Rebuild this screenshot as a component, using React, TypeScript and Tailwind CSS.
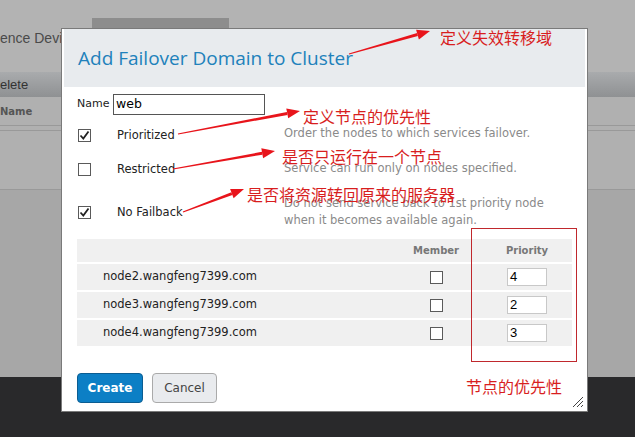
import React from "react";

const sans = "font-['DejaVu_Sans',sans-serif]";
const cjk = "font-['Noto_Sans_CJK_SC',sans-serif]";

function Arrow({ x1, y1, x2, y2 }: { x1: number; y1: number; x2: number; y2: number }) {
  const dx = x2 - x1;
  const dy = y2 - y1;
  const len = Math.hypot(dx, dy);
  const ux = dx / len;
  const uy = dy / len;
  const nx = -uy;
  const ny = ux;
  const bx = x2 - ux * 13;
  const by = y2 - uy * 13;
  const p = (x: number, y: number) => `${x.toFixed(1)},${y.toFixed(1)}`;
  const shaft = [
    p(x1 + nx * 0.5, y1 + ny * 0.5),
    p(bx + nx * 1.5, by + ny * 1.5),
    p(bx - nx * 1.5, by - ny * 1.5),
    p(x1 - nx * 0.5, y1 - ny * 0.5),
  ].join(" ");
  const head = [p(x2, y2), p(bx + nx * 5, by + ny * 5), p(bx - nx * 5, by - ny * 5)].join(" ");
  return (
    <g fill="#e8141b">
      <polygon points={shaft} />
      <polygon points={head} />
    </g>
  );
}

function Box({ checked }: { checked?: boolean }) {
  return (
    <span className="flex h-[13px] w-[13px] items-center justify-center border border-[#5a5a5a] bg-white">
      {checked && (
        <svg width="11" height="11" viewBox="0 0 11 11">
          <path d="M1.5 5.5 L4.3 8.5 L9.5 1.5" fill="none" stroke="#222" strokeWidth="1.8" />
        </svg>
      )}
    </span>
  );
}

const nodes = [
  { name: "node2.wangfeng7399.com", priority: "4" },
  { name: "node3.wangfeng7399.com", priority: "2" },
  { name: "node4.wangfeng7399.com", priority: "3" },
];

export default function App() {
  return (
    <div className={`relative h-[437px] w-[635px] overflow-hidden ${sans}`}>
      {/* page behind the dialog */}
      <div className="flex h-full flex-col">
        <div className="h-[72px] bg-[#b3b3b3]">
          <div className="ml-[92px] mt-[18px] h-[10px] w-[137px] bg-[#8d8d8d]" />
          <p className="mt-[2px] whitespace-nowrap font-['Liberation_Sans',sans-serif] text-[14px] leading-[16px] text-[#4a4a4a]">
            ence Devices
          </p>
        </div>
        <div className="flex h-[25px] items-center bg-gradient-to-b from-[#a9abad] to-[#8f9193] font-['Liberation_Sans',sans-serif] text-[13px] text-[#333]">
          elete
        </div>
        <div className="flex h-[29px] items-center border-b border-[#999] bg-[#b0b0b0] text-[10px] font-bold text-[#555]">
          Name
        </div>
        <div className="h-[5px] border-b border-[#999] bg-[#b0b0b0]" />
        <div className="h-[59px] border-b border-[#999] bg-[#b0b0b0]" />
        <div className="h-[187px] bg-[#a7a7a7]" />
        <div className="flex-1 bg-[#29292b]" />
      </div>

      {/* dialog */}
      <div className="absolute left-[61px] top-[28px] flex h-[384px] w-[527px] flex-col border border-[#7a7a7a] bg-white px-[2px]">
        <div className="flex h-[58px] items-center bg-[#e8ebee] pl-[14px]">
          <h2 className="font-['Open_Sans',sans-serif] text-[19px] text-[#2181bb]">Add Failover Domain to Cluster</h2>
        </div>
        <div className="flex flex-col pl-[13px] text-[11.5px] text-[#222]">
          <div className="mt-[7px] flex h-[21px] items-center">
            <span className="w-[36px] text-[11px]">Name</span>
            <span className="flex h-[21px] w-[152px] items-center border border-[#555] pl-[2px] text-[12.5px] text-black">web</span>
          </div>

          <div className="mt-[9px] flex h-[22px] items-center">
            <span className="w-[40px] pl-[1px]"><Box checked /></span>
            <span className="w-[167px] pt-[2px]">Prioritized</span>
            <span className="mb-[3px] text-[#8a8a8a]">Order the nodes to which services failover.</span>
          </div>
          <div className="mt-[12px] flex h-[22px] items-center">
            <span className="w-[40px] pl-[1px]"><Box /></span>
            <span className="w-[167px] pt-[1px]">Restricted</span>
            <span className="text-[#8a8a8a]">Service can run only on nodes specified.</span>
          </div>
          <div className="mt-[15px] flex h-[34px] items-center">
            <span className="w-[40px] pl-[1px]"><Box checked /></span>
            <span className="w-[167px] pt-[2px]">No Failback</span>
            <span className="leading-[17px] text-[#8a8a8a]">
              Do not send service back to 1st priority node
              <br />
              when it becomes available again.
            </span>
          </div>

          <div className="mt-[10px] flex w-[495px] flex-col gap-[2px]">
            <div className="flex h-[23px] items-center bg-[#f0f0f0] text-[10px] font-bold text-[#777]">
              <span className="w-[313px]" />
              <span className="w-[92px] text-center">Member</span>
              <span className="w-[90px] text-center">Priority</span>
            </div>
            {nodes.map((n) => (
              <div key={n.name} className="flex h-[26px] items-center bg-[#f0f0f0]">
                <span className="w-[313px] pl-[26px] text-[11.5px] text-[#222]">{n.name}</span>
                <span className="flex w-[92px] justify-center"><Box /></span>
                <span className="flex w-[90px] justify-center">
                  <span className="flex h-[18px] w-[40px] items-center border border-[#c8c8c8] bg-white pl-[2px] font-['Liberation_Sans',sans-serif] text-[13px] text-black">
                    {n.priority}
                  </span>
                </span>
              </div>
            ))}
          </div>

          <div className="mt-[27px] flex gap-[9px]">
            <button className="h-[30px] w-[66px] rounded-[4px] border border-[#0b5d92] bg-[#0c7fc5] text-[12px] font-bold text-white">
              Create
            </button>
            <button className="h-[30px] w-[65px] rounded-[4px] border border-[#aaa] bg-[#e9ebee] text-[12px] font-medium text-[#444]">
              Cancel
            </button>
          </div>
        </div>
        <svg className="absolute bottom-[3px] right-[3px]" width="12" height="12" viewBox="0 0 12 12">
          <path d="M1 11 L11 1 M5 11 L11 5 M9 11 L11 9" stroke="#444" strokeWidth="1" />
        </svg>
      </div>

      {/* annotations */}
      <div className="absolute left-[471px] top-[228px] h-[134px] w-[106px] border border-[#c0282d]" />
      <svg className="absolute left-0 top-0" width="635" height="437">
        <Arrow x1={349} y1={54} x2={430} y2={31} />
        <Arrow x1={178} y1={134} x2={300} y2={111} />
        <Arrow x1={173} y1={169} x2={275} y2={151} />
        <Arrow x1={183} y1={212} x2={244} y2={189} />
      </svg>
      <span className={`absolute left-[440px] top-[29px] ${cjk} text-[16px] leading-[16px] text-[#d81e1e]`}>定义失效转移域</span>
      <span className={`absolute left-[303px] top-[108px] ${cjk} text-[16px] leading-[16px] text-[#d81e1e]`}>定义节点的优先性</span>
      <span className={`absolute left-[282px] top-[148px] ${cjk} text-[16px] leading-[16px] text-[#d81e1e]`}>是否只运行在一个节点</span>
      <span className={`absolute left-[247px] top-[186px] ${cjk} text-[16px] leading-[16px] text-[#d81e1e]`}>是否将资源转回原来的服务器</span>
      <span className={`absolute left-[466px] top-[378px] ${cjk} text-[16px] leading-[16px] text-[#d81e1e]`}>节点的优先性</span>
    </div>
  );
}
